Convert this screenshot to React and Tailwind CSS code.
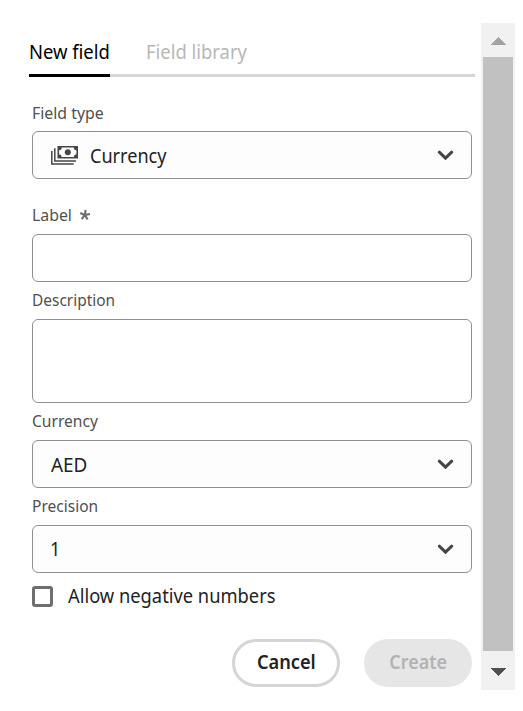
import React from "react";

function Label({ children, width }) {
  return (
    <div className="flex h-[37px] items-center whitespace-nowrap pb-[2px] text-[16px] leading-[22px] text-[#505050]">
      <span className={`inline-block origin-left ${width}`}>{children}</span>
    </div>
  );
}

function Chevron() {
  return (
    <svg className="ml-auto mr-[17px] h-[10px] w-[17px]" viewBox="0 0 17 10" fill="none">
      <path d="M2.3 2.2 8.5 8.2 14.7 2.2" stroke="#464646" strokeWidth="3" strokeLinecap="round" />
    </svg>
  );
}

function MoneyIcon() {
  return (
    <svg className="mr-[12px] h-[20px] w-[27px] shrink-0" viewBox="0 0 27 20">
      <path d="M.8 6v13H22.7M3.8 3.3v12.8H25" fill="none" stroke="#464646" strokeWidth="1.5" />
      <path
        fillRule="evenodd"
        fill="#464646"
        d="M6.5 1H27v12.5H6.500zM10.700 2.600a2.700 2.700 0 0 1-2.600 2.700v4a2.700 2.700 0 0 1 2.600 2.600h12.100a2.700 2.700 0 0 1 2.600-2.600v-4a2.700 2.700 0 0 1-2.600-2.700z"
      />
      <circle cx="16.8" cy="7.3" r="3" fill="#464646" />
    </svg>
  );
}

function Picker({ children }) {
  return (
    <button type="button" className="flex h-[48px] w-full items-center rounded-[6px] border border-[#909090] bg-[#fdfdfd] pl-[18px] text-left text-[20px] leading-[28px] text-[#222222]">
      {children}
      <Chevron />
    </button>
  );
}

export default function App() {
  return (
    <div className="flex h-[711px] w-[523px] overflow-hidden bg-white pt-[23px] font-['Noto_Sans','Open_Sans',sans-serif]">
      <main className="ml-[29px] w-[446px]">
        <nav className="flex h-[54px] whitespace-nowrap border-b-[3px] border-[#d5d5d5] text-[20px] leading-[28px]">
          <div className="h-[54px] w-[81px] border-b-[3px] border-black pt-[15px] text-black">
            <span className="inline-block origin-left scale-x-[0.92]">New field</span>
          </div>
          <div className="ml-[36px] pt-[15px] text-[#b7b7b7]">
            <span className="inline-block origin-left scale-x-[0.92]">Field library</span>
          </div>
        </nav>
        <form className="mx-[3px] pt-[17px]">
          <Label width="scale-x-[0.99] pt-[2px]">Field type</Label>
          <Picker>
            <MoneyIcon />
            <span className="inline-block origin-left scale-x-[0.905] pt-[2px]">Currency</span>
          </Picker>
          <div className="h-[18px]" />
          <div className="flex items-center">
            <Label width="scale-x-[0.99]">Label</Label>
            <svg className="mb-[2px] ml-[7px] h-[12px] w-[12px]" viewBox="0 0 12 12">
              <path d="M6 6 6.600 .8M6 6 1.200 4M6 6l5-1M6 6 2.600 10.100M6 6l2.600 4.600" stroke="#6e6e6e" strokeWidth="2.1" />
            </svg>
          </div>
          <input className="block h-[48px] w-full rounded-[6px] border border-[#909090] bg-white px-4" />
          <Label width="scale-x-[0.965]">Description</Label>
          <textarea className="block h-[84px] w-full resize-none rounded-[6px] border border-[#909090] bg-white p-4" />
          <Label width="scale-x-[0.975]">Currency</Label>
          <Picker>
            <span className="inline-block origin-left scale-x-[0.945] pt-[2px]">AED</span>
          </Picker>
          <Label width="scale-x-[0.97]">Precision</Label>
          <Picker>
            <span className="-ml-[1px] inline-block origin-left scale-x-[0.90]">1</span>
          </Picker>
          <label className="flex h-[47px] items-center whitespace-nowrap text-[20px] leading-[28px] text-[#222222]">
            <span className="mr-[15px] h-[21px] w-[21px] shrink-0 rounded-[3px] border-[3px] border-[#6e6e6e] bg-white" />
            <span className="inline-block origin-left scale-x-[0.915] pb-[2px]">Allow negative numbers</span>
          </label>
          <div className="mt-[19px] flex justify-end gap-[24px] text-[20px] font-semibold leading-[28px]">
            <button type="button" className="flex h-[48px] w-[108px] items-center justify-center rounded-full border-[3px] border-[#d5d5d5] pb-[2px] text-[#222222]">
              <span className="inline-block scale-x-[0.91]">Cancel</span>
            </button>
            <button type="button" className="flex h-[48px] w-[108px] items-center justify-center rounded-full bg-[#e6e6e6] pb-[2px] text-[#b3b3b3]">
              <span className="inline-block scale-x-[0.90]">Create</span>
            </button>
          </div>
        </form>
      </main>
      <aside className="ml-[6px] flex h-[667px] w-[34px] flex-col bg-[#f1f1f1]">
        <svg className="h-[34px] w-[34px]" viewBox="0 0 34 34" shapeRendering="crispEdges">
          <path d="M9 22 17 14l8 8z" fill="#a3a3a3" />
        </svg>
        <div className="mx-[2px] h-[594px] bg-[#c1c1c1]" />
        <svg className="h-[39px] w-[34px]" viewBox="0 0 34 39" shapeRendering="crispEdges">
          <path d="M9 17h16l-8 8z" fill="#505050" />
        </svg>
      </aside>
    </div>
  );
}
